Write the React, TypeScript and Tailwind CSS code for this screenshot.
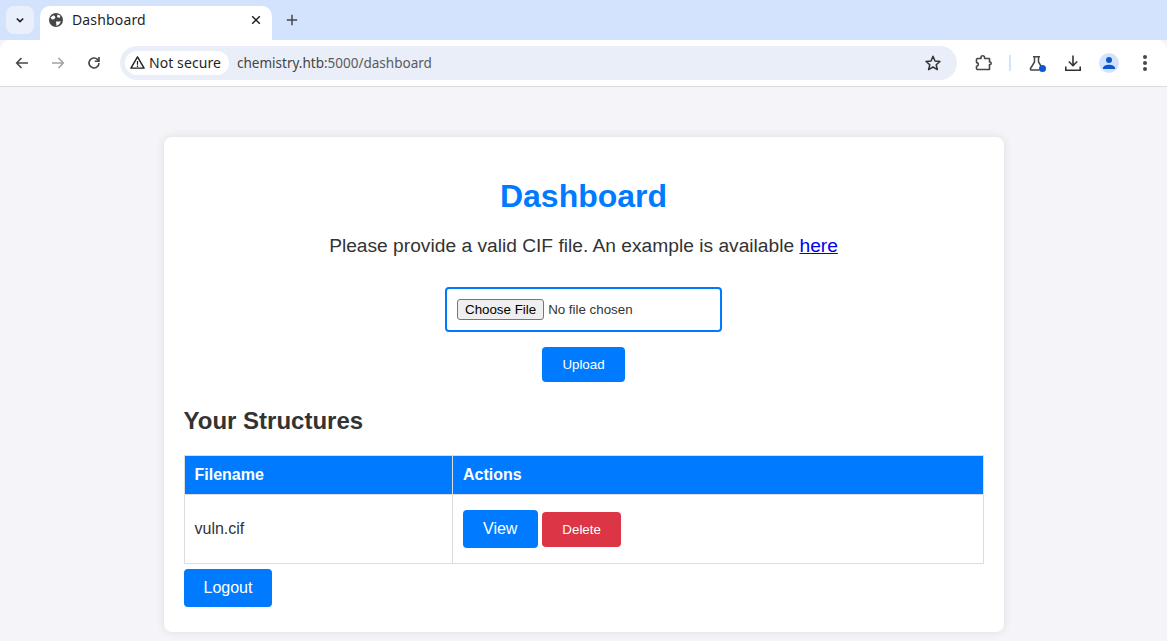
import React from "react";

const Icon = ({ children, size = 16, vb = 16, className = "" }: { children: React.ReactNode; size?: number; vb?: number; className?: string }) => (
  <svg width={size} height={size} viewBox={`0 0 ${vb} ${vb}`} fill="none" className={className}>{children}</svg>
);

export default function App() {
  return (
    <div className="h-[641px] overflow-hidden bg-[#f4f4f9] font-['Liberation_Sans',Arial,sans-serif] text-[#333]">
      {/* tab strip */}
      <div className="relative flex h-10 items-start bg-[#d3e3fd] pl-[6px] pt-[6px] font-['Noto_Sans',sans-serif]">
        <div className="flex h-7 w-7 items-center justify-center rounded-lg bg-[#e9effb]">
          <Icon size={12} vb={12}><path d="M2.8 4.5 6 7.6l3.2-3.1" stroke="#1f1f1f" strokeWidth="1.6" /></Icon>
        </div>
        <div className="ml-[6px] flex h-[34px] w-[232px] items-center rounded-t-[10px] bg-white pb-[7px] pl-2 pr-[11px]">
          <Icon size={16} vb={16}>
            <circle cx="8" cy="8" r="7" fill="#474747" />
            <path d="M2.5 5.500 5.500 3.200 7.500 5 6.500 7 4 7.500ZM9.500 2.500 12.500 3.800 11.500 6 9 5ZM8 9.500h5l-2 3-2.500 1.500Z" fill="#fff" />
          </Icon>
          <span className="ml-2 text-[14px] tracking-[0.15px] text-[#1f1f1f]">Dashboard</span>
          <Icon size={10} vb={10} className="ml-auto"><path d="M1.2 1.2l7.6 7.6M8.8 1.2 1.2 8.8" stroke="#1f1f1f" strokeWidth="1.5" /></Icon>
        </div>
        <div className="ml-[14px] mt-[8px]">
          <Icon size={12} vb={12}><path d="M6 .8v10.4M.8 6h10.4" stroke="#474747" strokeWidth="1.5" /></Icon>
        </div>
      </div>
      {/* toolbar */}
      <div className="flex h-[47px] items-center rounded-t-[10px] border-b border-[#dcdcdc] bg-white bg-clip-border pb-[1px] font-['Noto_Sans',sans-serif]">
        <div className="ml-[14px] flex w-[96px] items-center gap-[20px]">
          <Icon size={16}><path d="M14 8H3M7.5 3 2.700 8l4.800 5" stroke="#474747" strokeWidth="1.6" /></Icon>
          <Icon size={16}><path d="M2 8h11M8.500 3l4.800 5-4.800 5" stroke="#a3a3a3" strokeWidth="1.6" /></Icon>
          <Icon size={16}><path d="M13 8a5 5 0 1 1-1.500-3.600L13 6M13 2v4.200H8.800" stroke="#474747" strokeWidth="1.6" /></Icon>
        </div>
        <div className="ml-[10px] flex h-[34px] w-[837px] items-center rounded-full bg-[#e9eef8] pl-[5px] pr-[15px]">
          <div className="flex h-6 w-[104px] items-center rounded-full bg-white pl-[5px]">
            <Icon size={15} vb={16}><path d="M8 2 15 14H1Z" stroke="#1f1f1f" strokeWidth="1.500" strokeLinejoin="round" /><path d="M8 6.500v4M8 11.300v1.400" stroke="#1f1f1f" strokeWidth="1.300" /></Icon>
            <span className="ml-1 text-[14px] tracking-[0.08px] text-[#1f1f1f]">Not secure</span>
          </div>
          <span className="ml-2 mt-px text-[13.5px] text-[#444]">chemistry.htb<span className="text-[#5b5b5b]">:5000/dashboard</span></span>
          <Icon size={18} vb={18} className="ml-auto"><path d="M9 2.300 11 7l5 .4-3.800 3.300 1.200 4.900L9 13l-4.400 2.600 1.200-4.900L2 7.400 7 7Z" stroke="#333" strokeWidth="1.500" strokeLinejoin="round" /></Icon>
        </div>
        <div className="ml-[17px] flex items-center">
          <Icon size={18} vb={18}><path d="M3.500 4.500H7V3.500a1.800 1.800 0 0 1 3.600 0V4.500H15.500V8h.4a1.300 1.300 0 0 1 0 2.600h-.4V15.500H3.500a1 1 0 0 1-1-1V12.200a1.800 1.800 0 0 0 0-3.600V5.500a1 1 0 0 1 1-1Z" stroke="#474747" strokeWidth="1.600" strokeLinejoin="round" /></Icon>
          <div className="ml-[17px] h-[16px] w-[2px] bg-[#d3e3fd]" />
          <div className="relative ml-[17px] h-[18px] w-[18px]">
            <Icon size={18} vb={18}><path d="M5 2.700h7M6.500 3v5L2.500 14.500a1 1 0 0 0 .9 1.500H11.500M10.500 3v5l2.500 4" stroke="#474747" strokeWidth="1.500" /></Icon>
            <span className="absolute bottom-0 right-0 h-[7px] w-[7px] rounded-full bg-[#0b57d0]" />
          </div>
          <Icon size={18} vb={18} className="ml-[18px]"><path d="M9 1.500v10M4.800 7.500 9 11.700l4.200-4.200M1.800 12.500v3.700h14.400v-3.700" stroke="#333" strokeWidth="1.600" /></Icon>
          <div className="ml-[17px] flex h-5 w-5 items-center justify-center rounded-full bg-[#d3e3fd]">
            <Icon size={14} vb={14}><circle cx="7" cy="4" r="3" fill="#0b57d0" /><path d="M.8 13c0-3 3-4.200 6.200-4.200s6.200 1.200 6.200 4.200Z" fill="#0b57d0" /></Icon>
          </div>
          <div className="ml-[24px] flex flex-col gap-[2px]">
            <span className="h-1 w-1 rounded-full bg-[#474747]" />
            <span className="h-1 w-1 rounded-full bg-[#474747]" />
            <span className="h-1 w-1 rounded-full bg-[#474747]" />
          </div>
        </div>
      </div>
      {/* page */}
      <div className="mx-auto mt-[50px] w-[840px] rounded-lg bg-white px-5 pt-5 pb-[25px] shadow-[0_0_10px_rgba(0,0,0,0.1)]">
        <h1 className="mt-[21px] text-center text-[32px] leading-[37px] font-bold text-[#007bff]">Dashboard</h1>
        <p className="mt-[20px] text-center text-[19.2px] leading-[22px]">
          Please provide a valid CIF file. An example is available <a href="#" className="text-[#0000ee] underline">here</a>
        </p>
        <form className="mt-[20px] flex flex-col items-center">
          <input
            type="file"
            className="mt-[10px] rounded border-2 border-[#007bff] p-[10px] text-[13.33px] leading-[15px] file:mr-[4px] file:rounded-[3px] file:border file:border-[#767676] file:bg-[#efefef] file:px-[7px] file:py-[2px] file:leading-[15px] file:text-black"
          />
          <button type="button" className="mt-[15px] rounded bg-[#007bff] px-5 py-[10px] text-[13.33px] leading-[15px] text-white">Upload</button>
        </form>
        <h2 className="mt-[25px] text-[24px] leading-[28px] font-bold">Your Structures</h2>
        <table className="mt-[20px] w-full border-collapse text-left text-[16px]">
          <thead>
            <tr className="bg-[#007bff] text-white">
              <th className="w-[268px] border border-[#ddd] p-[10px] leading-[18px] font-bold">Filename</th>
              <th className="border border-[#ddd] py-[10px] pl-[10.5px] pr-[10px] leading-[18px] font-bold">Actions</th>
            </tr>
          </thead>
          <tbody>
            <tr>
              <td className="border border-[#ddd] p-[10px]">vuln.cif</td>
              <td className="border border-[#ddd] p-[10px]">
                <div className="py-[5px]">
                  <a href="#" className="inline-block rounded bg-[#007bff] px-[20.5px] py-[10px] leading-[18px] text-white">View</a>{" "}
                  <button type="button" className="rounded bg-[#dc3545] px-5 py-[10px] text-[13.33px] leading-[15px] text-white">Delete</button>
                </div>
              </td>
            </tr>
          </tbody>
        </table>
        <a href="#" className="mt-[5px] inline-block rounded bg-[#007bff] px-5 py-[10px] text-[16px] leading-[18px] text-white">Logout</a>
      </div>
    </div>
  );
}
